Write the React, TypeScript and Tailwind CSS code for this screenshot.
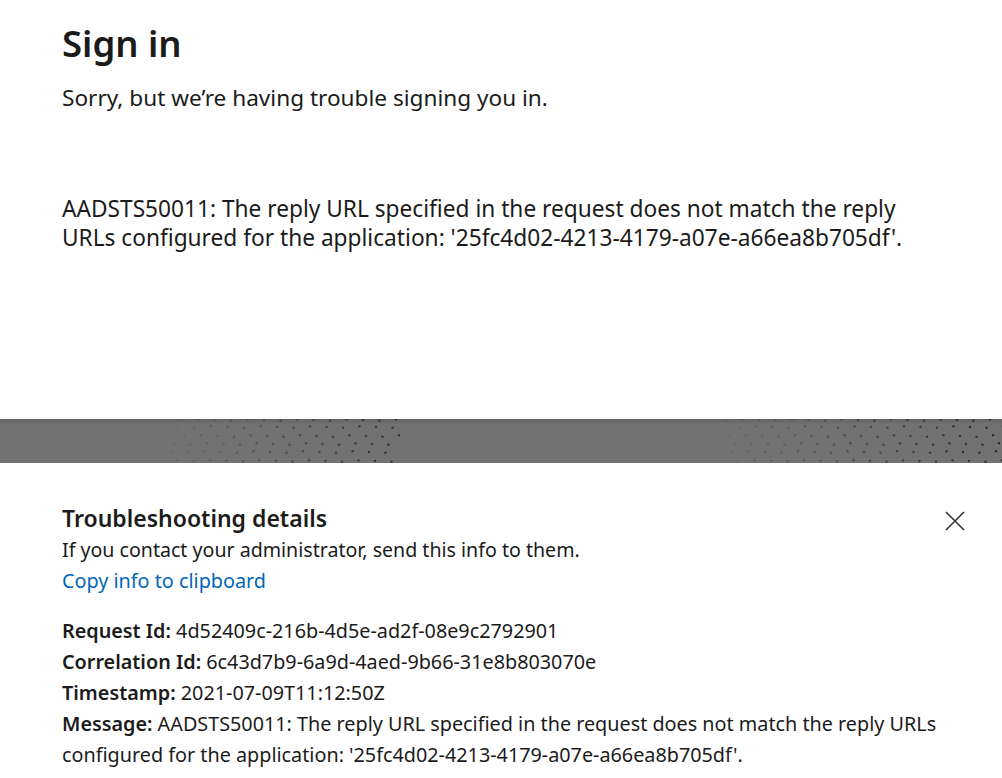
import React from "react";

function Dots() {
  const dots: { x: number; y: number; o: number }[] = [];
  const rows = [1, 8, 17, 25, 33, 42];
  for (let j = 0; j < rows.length; j++) {
    for (let i = 0; i < 70; i++) {
      const x = i * 16.5 + (j % 2) * 8 + ((j * 5) % 7);
      const y = rows[j] + ((i % 3) - 1) * 0.8;
      let o = 0;
      if (x >= 140 && x <= 400) o = Math.min(1, (x - 140) / 250) * 0.7;
      else if (x >= 690) o = Math.min(1, (x - 690) / 300) * 0.75;
      if (o > 0.08) dots.push({ x, y, o });
    }
  }
  return (
    <svg width="1002" height="44" viewBox="0 0 1002 44" className="block">
      {dots.map((d, k) => (
        <circle key={k} cx={d.x} cy={d.y} r={1.2} fill="#1a1a1a" opacity={d.o} />
      ))}
    </svg>
  );
}

function CloseIcon() {
  return (
    <svg width="20" height="20" viewBox="0 0 20 20" className="block">
      <path d="M1 1 L19 19 M19 1 L1 19" stroke="#333" strokeWidth="1.6" fill="none" />
    </svg>
  );
}

export default function App() {
  return (
    <div
      className="w-[1002px] h-[778px] overflow-hidden bg-white text-[#1b1b1b]"
      style={{ fontFamily: '"Noto Sans", "Open Sans", sans-serif' }}
    >
      <div className="h-[419px] pl-[62px] pt-[19px]">
        <h1 className="text-[36.5px] leading-[48px] font-semibold">Sign in</h1>
        <p className="mt-[16px] text-[22.6px] leading-[30px]">Sorry, but we’re having trouble signing you in.</p>
        <p className="mt-[81px] text-[22.7px] leading-[29.4px]">
          AADSTS50011: The reply URL specified in the request does not match the reply
          <br />
          URLs configured for the application: '25fc4d02-4213-4179-a07e-a66ea8b705df'.
        </p>
      </div>
      <div className="h-[44px] bg-[linear-gradient(to_bottom,#626262,#727272_5px,#727272)]">
        <Dots />
      </div>
      <div className="pl-[62px] pr-[37px] pt-[41px]">
        <div className="flex items-start justify-between">
          <h2 className="text-[23px] leading-[29.5px] font-semibold">Troubleshooting details</h2>
          <div className="mt-[7px]">
            <CloseIcon />
          </div>
        </div>
        <p className="text-[19.6px] leading-[31.5px]">If you contact your administrator, send this info to them.</p>
        <p className="text-[19.8px] leading-[31.5px] text-[#0067b8]">Copy info to clipboard</p>
        <div className="mt-[18.5px] text-[19.8px] leading-[31px]">
          <p>
            <span className="font-semibold">Request Id:</span> 4d52409c-216b-4d5e-ad2f-08e9c2792901
          </p>
          <p>
            <span className="font-semibold">Correlation Id:</span> 6c43d7b9-6a9d-4aed-9b66-31e8b803070e
          </p>
          <p>
            <span className="font-semibold">Timestamp:</span> 2021-07-09T11:12:50Z
          </p>
          <p>
            <span className="font-semibold">Message:</span> AADSTS50011: The reply URL specified in the request does not match the reply URLs
            <br />
            configured for the application: '25fc4d02-4213-4179-a07e-a66ea8b705df'.
          </p>
        </div>
      </div>
    </div>
  );
}
